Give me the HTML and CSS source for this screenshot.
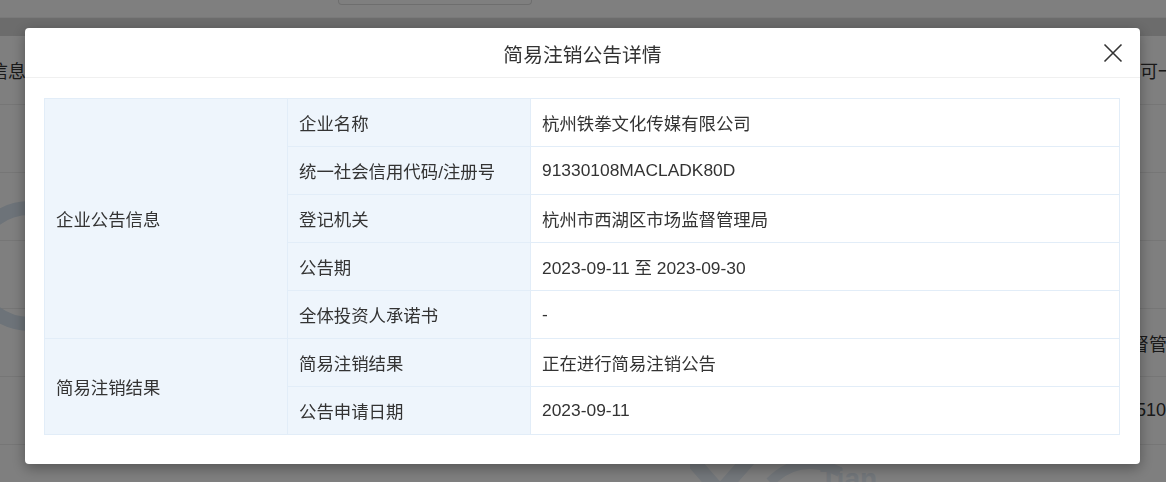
FILE: index.html
```html
<!DOCTYPE HTML>
<html>
<head>
	<meta charset="utf-8">
	<title>简易注销公告详情</title>
	<link rel="stylesheet" href="styles.css">
</head>
<body>
	<div class="page">
		<div class="page-top">
			<div class="page-btn"></div>
		</div>
		<div class="page-band"></div>
		<div class="page-rows">
			<div class="page-row"><span class="cell-l">企业公告信息</span><span class="cell-r">可一</span></div>
			<div class="page-row"><span class="cell-l"></span><span class="cell-r"></span></div>
			<div class="page-row"><span class="cell-l"></span><span class="cell-r"></span></div>
			<div class="page-row"><span class="cell-l"></span><span class="cell-r"></span></div>
			<div class="page-row"><span class="cell-l"></span><span class="cell-r cut-1">督管理局</span></div>
			<div class="page-row"><span class="cell-l"></span><span class="cell-r cut-2">5102</span></div>
			<div class="page-row"><span class="cell-l"></span><span class="cell-r"></span></div>
		</div>
		<svg class="mark mark-left" width="120" height="160" viewBox="0 0 120 160">
			<path d="M80 22 A58 58 0 1 0 80 138" fill="none" stroke="#dbe7f2" stroke-width="14"/>
		</svg>
		<svg class="mark mark-bottom" width="260" height="40" viewBox="0 0 260 40">
			<path d="M0 6 L30 40 L60 6" fill="none" stroke="#e6eef6" stroke-width="14"/>
			<path d="M80 30 Q110 0 150 20" fill="none" stroke="#e6eef6" stroke-width="10"/>
			<text x="130" y="36" font-size="28" fill="#e6eef6" font-family="Liberation Sans, sans-serif" font-weight="bold">Tian</text>
		</svg>
	</div>

	<div class="mask">
		<div class="modal">
			<div class="modal-head">
				<span></span>
				<span class="modal-title">简易注销公告详情</span>
				<button class="modal-close" type="button">
					<svg width="20" height="20" viewBox="0 0 20 20">
						<path d="M1.5 1.5 L18.5 18.5 M18.5 1.5 L1.5 18.5" stroke="#333" stroke-width="1.6" fill="none"/>
					</svg>
				</button>
			</div>
			<div class="modal-body">
				<table class="detail">
					<colgroup>
						<col class="c1">
						<col class="c2">
						<col>
					</colgroup>
					<tr>
						<td class="lbl" rowspan="5">企业公告信息</td>
						<td class="lbl">企业名称</td>
						<td>杭州铁拳文化传媒有限公司</td>
					</tr>
					<tr>
						<td class="lbl">统一社会信用代码/注册号</td>
						<td>91330108MACLADK80D</td>
					</tr>
					<tr>
						<td class="lbl">登记机关</td>
						<td>杭州市西湖区市场监督管理局</td>
					</tr>
					<tr>
						<td class="lbl">公告期</td>
						<td>2023-09-11 至 2023-09-30</td>
					</tr>
					<tr>
						<td class="lbl">全体投资人承诺书</td>
						<td>-</td>
					</tr>
					<tr>
						<td class="lbl" rowspan="2">简易注销结果</td>
						<td class="lbl">简易注销结果</td>
						<td>正在进行简易注销公告</td>
					</tr>
					<tr>
						<td class="lbl">公告申请日期</td>
						<td>2023-09-11</td>
					</tr>
				</table>
			</div>
		</div>
	</div>
</body>
</html>
```

FILE: styles.css
```css
*, *::after, *::before{
	box-sizing: border-box;
	margin: 0;
	padding: 0;
}
html, body{
	width: 100%;
	height: 100%;
}
body{
	overflow: hidden;
	font-family: "Liberation Sans", "Noto Sans CJK SC", sans-serif;
	color: #333;
	background: #fff;
}

/* page behind the dialog */
.page{
	position: relative;
	height: 100%;
	overflow: hidden;
}
.page-top{
	height: 18px;
	border-bottom: 1px solid #f2f2f2;
}
.page-btn{
	margin-left: 338px;
	width: 194px;
	height: 5px;
	border: 1px solid #ddd;
	border-top: 0;
	border-radius: 0 0 4px 4px;
}
.page-band{
	height: 18px;
	background: #d9d9d9;
}
.page-rows{
	display: flex;
	flex-direction: column;
}
.page-row{
	height: 68px;
	border-bottom: 1px solid #ececec;
	display: flex;
	align-items: center;
	justify-content: space-between;
	font-size: 18px;
	color: #333;
}
.page-row:first-child{
	margin-top: -17px;
	height: 86px;
	padding-top: 17px;
}
.cell-l{
	width: 26px;
	white-space: nowrap;
	overflow: hidden;
	direction: rtl;
}
.cell-r{
	width: 26px;
	white-space: nowrap;
	overflow: hidden;
}
.cut-1{ text-indent: -9px; }
.cut-2{ text-indent: -4px; }
.mark{
	position: absolute;
}
.mark-left{
	left: -50px;
	top: 186px;
}
.mark-bottom{
	left: 690px;
	top: 452px;
}

/* dialog */
.mask{
	position: fixed;
	inset: 0;
	background: rgba(0, 0, 0, .5);
}
.modal{
	width: 1115px;
	margin: 28px 0 0 25px;
	background: #fff;
	border-radius: 4px;
	box-shadow: 0 4px 14px rgba(0, 0, 0, .35);
}
.modal-head{
	height: 50px;
	border-bottom: 1px solid #f0f0f0;
	display: grid;
	grid-template-columns: 1fr auto 1fr;
	align-items: center;
}
.modal-title{
	font-size: 19.8px;
	color: #333;
	padding-top: 1px;
}
.modal-close{
	justify-self: end;
	margin-right: 17px;
	margin-top: 1px;
	border: 0;
	background: none;
	display: flex;
	cursor: pointer;
}
.modal-body{
	padding: 20px 20px 29px 19px;
}

.detail{
	width: 100%;
	border-collapse: collapse;
	table-layout: fixed;
	font-size: 17.4px;
	color: #333;
}
.c1{ width: 243px; }
.c2{ width: 243px; }
.detail td{
	height: 48px;
	border: 1px solid #e2edf8;
	padding: 0 11px;
	vertical-align: middle;
	white-space: nowrap;
}
.detail .lbl{
	background: #eef5fc;
}
```
